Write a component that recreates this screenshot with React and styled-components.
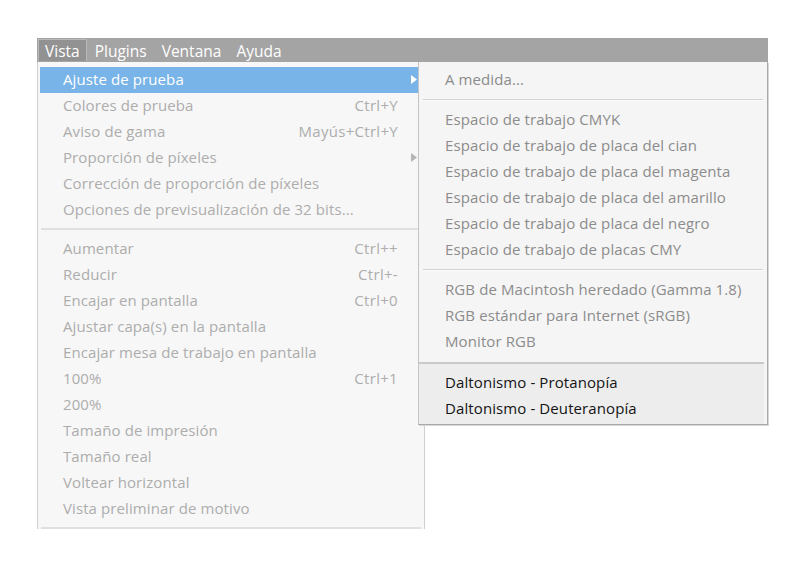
import React from 'react';
import styled, { createGlobalStyle } from 'styled-components';

const GlobalStyle = createGlobalStyle`
  html, body {
    margin: 0;
    padding: 0;
    background: #ffffff;
  }
  body {
    font-family: 'Open Sans', 'Noto Sans', sans-serif;
  }
`;

const leftGroups = [
  [
    { label: 'Ajuste de prueba', arrow: true, active: true },
    { label: 'Colores de prueba', shortcut: 'Ctrl+Y' },
    { label: 'Aviso de gama', shortcut: 'Mayús+Ctrl+Y' },
    { label: 'Proporción de píxeles', arrow: true },
    { label: 'Corrección de proporción de píxeles' },
    { label: 'Opciones de previsualización de 32 bits...' },
  ],
  [
    { label: 'Aumentar', shortcut: 'Ctrl++' },
    { label: 'Reducir', shortcut: 'Ctrl+-' },
    { label: 'Encajar en pantalla', shortcut: 'Ctrl+0' },
    { label: 'Ajustar capa(s) en la pantalla' },
    { label: 'Encajar mesa de trabajo en pantalla' },
    { label: '100%', shortcut: 'Ctrl+1' },
    { label: '200%' },
    { label: 'Tamaño de impresión' },
    { label: 'Tamaño real' },
    { label: 'Voltear horizontal' },
    { label: 'Vista preliminar de motivo' },
  ],
];

const subGroups = [
  ['A medida...'],
  [
    'Espacio de trabajo CMYK',
    'Espacio de trabajo de placa del cian',
    'Espacio de trabajo de placa del magenta',
    'Espacio de trabajo de placa del amarillo',
    'Espacio de trabajo de placa del negro',
    'Espacio de trabajo de placas CMY',
  ],
  [
    'RGB de Macintosh heredado (Gamma 1.8)',
    'RGB estándar para Internet (sRGB)',
    'Monitor RGB',
  ],
];

const Arrow = ({ color }) => (
  <svg width="6" height="9" viewBox="0 0 6 9">
    <path d="M0 0 L6 4.5 L0 9 Z" fill={color} />
  </svg>
);

export default function App() {
  return (
    <Page>
      <GlobalStyle />
      <MenuBar>
        <BarItem $open>Vista</BarItem>
        <BarItem>Plugins</BarItem>
        <BarItem>Ventana</BarItem>
        <BarItem>Ayuda</BarItem>
      </MenuBar>
      <DropArea>
        <Menu>
          {leftGroups.map((group, gi) => (
            <React.Fragment key={gi}>
              {group.map((item) => (
                <Row key={item.label} $active={item.active}>
                  <Label>{item.label}</Label>
                  {item.shortcut && <Shortcut>{item.shortcut}</Shortcut>}
                  {item.arrow && (
                    <ArrowBox>
                      <Arrow color={item.active ? '#ffffff' : '#b5b5b5'} />
                    </ArrowBox>
                  )}
                </Row>
              ))}
              <Separator />
            </React.Fragment>
          ))}
        </Menu>
        <SubMenu>
          <SubTop>
            {subGroups.map((group, gi) => (
              <React.Fragment key={gi}>
                {gi > 0 && <SubSeparator />}
                {group.map((label) => (
                  <SubRow key={label}>{label}</SubRow>
                ))}
              </React.Fragment>
            ))}
          </SubTop>
          <SubBottom>
            <SubRow $dark>Daltonismo - Protanopía</SubRow>
            <SubRow $dark>Daltonismo - Deuteranopía</SubRow>
          </SubBottom>
        </SubMenu>
      </DropArea>
    </Page>
  );
}

const Page = styled.div`
  padding: 38px 0 0 37px;
  width: 731px;
  font-size: 15px;
`;

const MenuBar = styled.div`
  display: flex;
  align-items: stretch;
  height: 24px;
  background: #a4a4a4;
  padding-left: 1px;
`;

const BarItem = styled.div`
  display: flex;
  align-items: center;
  padding: 0 6px 0 6px;
  margin: 1px 1px 1px 0;
  color: #ffffff;
  font-size: 15.5px;
  background: ${(p) => (p.$open ? '#929292' : 'transparent')};
  border: 1px solid ${(p) => (p.$open ? '#b8b8b8' : 'transparent')};
  border-bottom: none;
`;

const DropArea = styled.div`
  position: relative;
`;

const Menu = styled.div`
  width: 388px;
  box-sizing: border-box;
  background: #f7f7f7;
  border-left: 1px solid #cfcfcf;
  border-right: 1px solid #cfcfcf;
  padding: 5px 3px 0 2px;
`;

const Row = styled.div`
  display: flex;
  align-items: center;
  height: 26px;
  padding: 0 0 2px 23px;
  box-sizing: border-box;
  background: ${(p) => (p.$active ? '#78b4e8' : 'transparent')};
  color: ${(p) => (p.$active ? '#ffffff' : '#adadad')};
  position: relative;
`;

const Label = styled.span`
  flex: 1;
  white-space: nowrap;
  letter-spacing: 0.1px;
`;

const Shortcut = styled.span`
  padding-right: 23px;
  white-space: nowrap;
  letter-spacing: 0.3px;
`;

const ArrowBox = styled.span`
  position: absolute;
  right: 4px;
  top: 8px;
  display: flex;
`;

const Separator = styled.div`
  height: 2px;
  background: #e0e0e0;
  margin: 5px 0 6px 1px;
`;

const SubMenu = styled.div`
  position: absolute;
  left: 381px;
  top: 0;
  width: 350px;
  box-sizing: border-box;
  background: #f5f5f5;
  border: 1px solid #a9a9a9;
  border-top: none;
  border-left-color: #c4c4c4;
  box-shadow: 1px 1px 0 #d8d8d8;
`;

const SubTop = styled.div`
  padding: 5px 0 7px;
`;

const SubRow = styled.div`
  height: 26px;
  display: flex;
  align-items: center;
  padding: 0 0 2px 26px;
  box-sizing: border-box;
  white-space: nowrap;
  letter-spacing: 0.1px;
  color: ${(p) => (p.$dark ? '#141414' : '#8c8c8c')};
`;

const SubSeparator = styled.div`
  height: 1px;
  background: #d2d2d2;
  border-bottom: 1px solid #fbfbfb;
  margin: 6px 4px 6px 4px;
`;

const SubBottom = styled.div`
  background: #ededed;
  border-top: 2px solid #c9c9c9;
  margin: 0 3px 0 0;
  padding: 6px 0 2px;
`;
